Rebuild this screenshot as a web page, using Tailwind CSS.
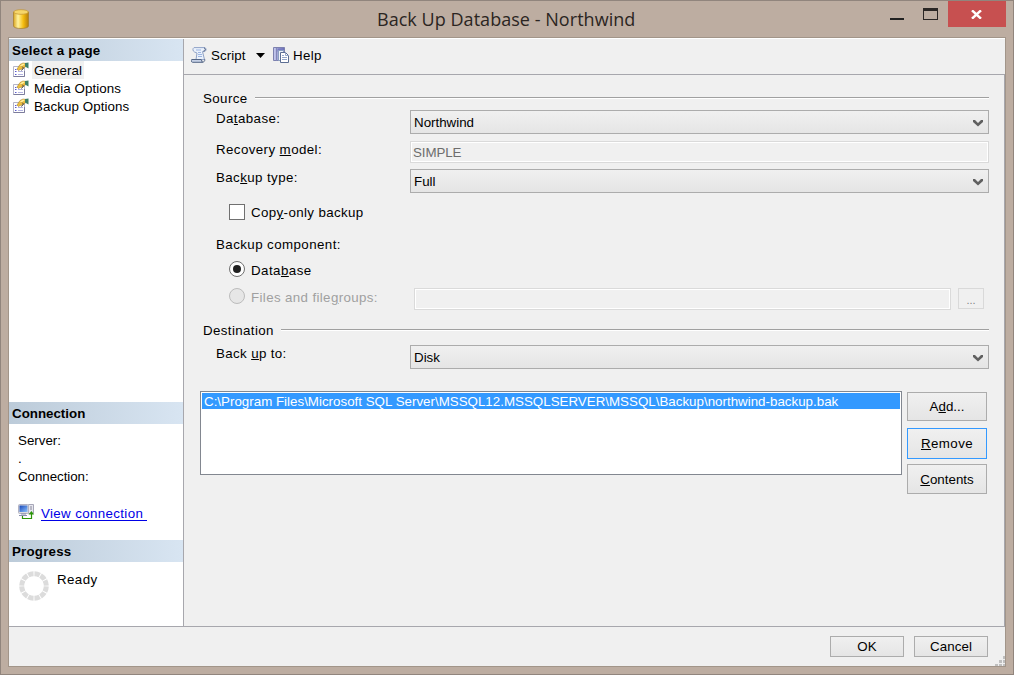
<!DOCTYPE html>
<html lang="en">
<head>
<meta charset="utf-8">
<title>Back Up Database - Northwind</title>
<script src="https://cdn.jsdelivr.net/npm/@tailwindcss/browser@4"></script>
</head>
<body class="w-[1014px] h-[675px] overflow-hidden font-['Liberation_Sans',Arial,sans-serif] text-[13.33px] leading-[18px] text-black">
<svg class="absolute h-0 w-0">
  <defs>
    <linearGradient id="gold" x1="0" x2="1"><stop offset="0" stop-color="#d9a520"/><stop offset=".3" stop-color="#fff3a0"/><stop offset=".65" stop-color="#f5bd10"/><stop offset="1" stop-color="#b57c0a"/></linearGradient>
    <linearGradient id="screen" x1="0" y1="0" x2="1" y2="1"><stop offset="0" stop-color="#1746b8"/><stop offset="1" stop-color="#8fc4ff"/></linearGradient>
    <linearGradient id="book" x1="0" x2="1"><stop offset="0" stop-color="#c9cdf0"/><stop offset="1" stop-color="#6467ae"/></linearGradient>
    <symbol id="page" viewBox="0 0 16 16">
      <path d="M.5 4.500h11v10H.5z" fill="#fff" stroke="#b5b5c8"/>
      <path d="M.5 14.500h11V9" fill="none" stroke="#7c7c9c"/>
      <path d="M2 7.500h1.500M2 9.500h1.500M2 12.500h1.500" stroke="#5a5ad0"/>
      <path d="M5 9.500h5M5 12.500h5" stroke="#b4b4e0"/>
      <path d="M4 7l3-4.500L10 1l3 .5-1 4-3 1.500-2 .5-1.500 1z" fill="#efbe3c" stroke="#a48430" stroke-width=".6"/>
      <path d="M7 3.500L10 1.500l2 .5-3.500 2.500z" fill="#fff0a0"/>
      <path d="M12 1l3.500-.5v6L12 4.500z" fill="#3d8068"/>
      <path d="M9 4.500l1.500 1.500-2 2.500" stroke="#444" fill="none"/>
    </symbol>
    <symbol id="chev" viewBox="0 0 10 8"><path d="M0 1h2l3 3 3-3h2v2L5 7.500 0 3z" fill="#606060"/></symbol>
  </defs>
</svg>
<div class="flex h-[675px] w-[1014px] flex-col border border-[#91857d] bg-[#bdada1] px-[7px] pb-[7px]">
  <header class="flex h-9 shrink-0 items-start">
    <svg class="ml-[5px] mt-2 h-5 w-4" viewBox="0 0 16 20"><path d="M.5 3v14c0 3.300 15 3.300 15 0V3z" fill="url(#gold)" stroke="#a57d2b" stroke-width=".7"/><ellipse cx="8" cy="3" rx="7.300" ry="2.300" fill="#f6d66a" stroke="#c29432" stroke-width=".7"/></svg>
    <h1 class="ml-[348px] mt-[6px] w-[300px] whitespace-nowrap font-['Open_Sans',sans-serif] text-[18px] leading-6 tracking-[.04px] text-[#2b2522]">Back Up Database - Northwind</h1>
    <svg class="ml-[213px] mt-[7px] h-3 w-12" viewBox="0 0 48 12" shape-rendering="crispEdges"><path d="M0 10h14v2H0z" fill="#222"/><path d="M33 0h15v12H33zm1 3v8h13V3z" fill="#2b2725" fill-rule="evenodd"/></svg>
    <div class="ml-[10px] flex h-[26px] w-[58px] items-center justify-center bg-[#c75050]"><svg class="mr-[2px] h-[9px] w-[11px]" viewBox="0 0 11 9"><path d="M1 .3l9 8.400M10 .3L1 8.700" stroke="#fff" stroke-width="2.400"/></svg></div>
  </header>
  <div class="flex min-h-0 w-[998px] grow flex-col border border-[#a29589] bg-[#f0f0f0]">
    <div class="flex h-[588px] shrink-0 border-t border-white">
      <aside class="flex w-[175px] shrink-0 flex-col border-r border-[#a7a7ad] bg-white">
        <h2 class="h-[22px] bg-linear-to-r from-[#bccbd9] to-[#d8e5f2] pl-[3px] pt-[3px] font-bold tracking-[.25px]">Select a page</h2>
        <ul class="h-[341px]">
          <li class="flex h-[18px] items-center gap-1 pl-1"><svg class="h-4 w-4"><use href="#page"/></svg><span class="-ml-px h-[18px] bg-[#f0f0f0] px-[2px] pt-px tracking-[.1px]">General</span></li>
          <li class="flex h-[18px] items-center gap-[5px] pl-1"><svg class="h-4 w-4"><use href="#page"/></svg><span class="pt-px tracking-[.08px]">Media Options</span></li>
          <li class="flex h-[18px] items-center gap-[5px] pl-1"><svg class="h-4 w-4"><use href="#page"/></svg><span class="pt-px tracking-[.08px]">Backup Options</span></li>
        </ul>
        <h2 class="h-[22px] bg-linear-to-r from-[#bccbd9] to-[#d8e5f2] pl-[3px] pt-[3px] font-bold">Connection</h2>
        <div class="h-[116px] pl-[9px] pt-2">
          <p class="h-[18px]">Server:</p>
          <p class="h-[18px]">.</p>
          <p class="h-[36px] tracking-[-.05px]">Connection:</p>
          <div class="flex">
            <svg class="h-4 w-4" viewBox="0 0 16 16"><path d="M10.500 .5h5v9h-5z" fill="#e6e6ee" stroke="#a7a7b8"/><path d="M12 3h2M12 5h2" stroke="#889"/><rect x=".5" y=".5" width="10" height="9" rx="1" fill="#ddd" stroke="#b3b3c4"/><path d="M1.500 1.500h8v6.500h-8z" fill="url(#screen)"/><path d="M1 11.500h8M3 10h5" stroke="#888fae"/><path d="M4.500 12v2.500h9V9" fill="none" stroke="#2b9409" stroke-width="1.200"/><path d="M10.500 10.500l3-3.500 2.500 3.500z" fill="#2b9409"/></svg>
            <a class="ml-[7px] mt-px h-4 w-[106px] whitespace-nowrap border-b border-[#0000e6] text-[#0000e6] tracking-[.36px]">View connection</a>
          </div>
        </div>
        <h2 class="h-[22px] bg-linear-to-r from-[#bccbd9] to-[#d8e5f2] pl-[3px] pt-[3px] font-bold tracking-[.2px]">Progress</h2>
        <div class="flex grow pl-[10px] pt-[9px]">
          <svg class="h-[30px] w-[30px]" viewBox="0 0 30 30"><circle cx="15" cy="15" r="12.300" fill="none" stroke="#dcdcdc" stroke-width="5" pathLength="120" stroke-dasharray="8.500 1.500" stroke-dashoffset="-.75"/></svg>
          <span class="ml-2 tracking-[.4px]">Ready</span>
        </div>
      </aside>
      <main class="flex grow flex-col">
        <div class="flex h-9 shrink-0 items-start border-b border-[#a7a7ad] pl-[7px] pt-2">
          <svg class="h-4 w-4" viewBox="0 0 16 16"><path d="M3 .6h10c3 0 2.500 4 0 4h-1.500l2 8H5L6 6 3.500 5C1.500 4 1.500 1.500 3 .6z" fill="#eaf1fb" stroke="#8fa2c6"/><path d="M5 3h5M7 5.500h3M7 7.500h4M7 9.500h4" stroke="#9bb4e2"/><path d="M.7 12.500h9.600l1 2.800H1.500C.2 15 0 13.500 .7 12.500z" fill="#c5d0e5" stroke="#536585"/><path d="M11 15.200c3 0 3-2.200 2.500-3.200" fill="none" stroke="#536585"/><path d="M13 1c2 .5 1.500 3-.5 3" fill="none" stroke="#3f4f72"/></svg>
          <span class="ml-[4px] w-[45px] tracking-[.1px]">Script</span>
          <svg class="mt-[6px] h-[5px] w-[9px]" viewBox="0 0 9 5"><path d="M0 0h9L4.500 5z"/></svg>
          <svg class="ml-2 h-4 w-4" viewBox="0 0 16 16"><path d="M.5 .5h11v13H.5z" fill="url(#book)" stroke="#7d81af"/><path d="M3.500 1v13" stroke="#8388b8"/><path d="M4.500 1.500h6v3h-6z" fill="#777bc2"/><path d="M5.500 3.500h5v10h-5z" fill="#eef2fa" stroke="#8ba0c1"/><path d="M7.500 5.500h5l3 3v7h-8z" fill="#fff" stroke="#5c6e93"/><path d="M12.500 5.500v3h3M9 8.500h2M9 10.500h5M9 12.500h5" stroke="#94a7c9" fill="none"/></svg>
          <span class="ml-1 tracking-[.35px]">Help</span>
        </div>
        <div class="flex grow flex-col border-r border-[#a7a7ad] pl-4 pr-[15px] pt-[15px]">
          <div class="flex h-5 pl-[3px]"><span class="tracking-[.4px]">Source</span><i class="ml-[7px] mt-[7px] h-[2px] grow border-t border-[#a0a0a0] bg-white"></i></div>
          <div class="flex h-[31px] pl-4"><label class="w-[194px] tracking-[.4px]">Da<u>t</u>abase:</label><div class="flex h-6 grow items-center justify-between border border-[#acacac] bg-linear-to-b from-[#f0f0f0] to-[#e5e5e5] pl-[3px] pr-[5px]"><span class="pt-[2px]">Northwind</span><svg class="mt-[2px] h-2 w-[10px]"><use href="#chev"/></svg></div></div>
          <div class="flex h-7 pl-4"><label class="w-[194px] tracking-[.4px]">Recovery <u>m</u>odel:</label><div class="flex h-[22px] grow items-center border border-[#dadada] pl-[2px] pt-[2px] tracking-[-.1px] text-[#6d6d6d] inset-ring inset-ring-white">SIMPLE</div></div>
          <div class="flex h-[35px] pl-4"><label class="w-[194px] tracking-[.4px]">Bac<u>k</u>up type:</label><div class="flex h-6 grow items-center justify-between border border-[#acacac] bg-linear-to-b from-[#f0f0f0] to-[#e5e5e5] pl-[3px] pr-[5px]"><span class="pt-[2px]">Full</span><svg class="mt-[2px] h-2 w-[10px]"><use href="#chev"/></svg></div></div>
          <div class="flex h-8 gap-[6px] pl-[29px] tracking-[.37px]"><i class="h-4 w-4 border border-[#707070] bg-white"></i><span>Cop<u>y</u>-only backup</span></div>
          <div class="h-[25px] pl-4 tracking-[.42px]">Backup component:</div>
          <div class="flex h-[27px] gap-[6px] pl-[29px] tracking-[.45px]"><i class="flex h-4 w-4 items-center justify-center rounded-full border border-[#707070] bg-white"><i class="h-2 w-2 rounded-full bg-[#212121]"></i></i><span class="pt-px">Data<u>b</u>ase</span></div>
          <div class="flex h-[34px] pl-[29px] text-[#a0a0a0]"><i class="mr-[6px] h-4 w-4 rounded-full border border-[#bcbcbc] bg-[#e6e6e6]"></i><span class="w-[163px] pt-px tracking-[.36px]">Files and file<u>g</u>roups:</span><i class="h-[22px] grow border border-[#dadada] inset-ring inset-ring-white"></i><span class="ml-[7px] mr-[5px] h-[21px] w-[26px] border border-[#d9d9d9] pt-[3px] text-center text-[11px] leading-4 text-[#838383]">...</span></div>
          <div class="flex h-[23px] pl-[3px]"><span class="tracking-[.38px]">Destination</span><i class="ml-[7px] mt-[7px] h-[2px] grow border-t border-[#a0a0a0] bg-white"></i></div>
          <div class="flex h-[46px] pl-4"><label class="w-[194px] tracking-[.36px]">Back <u>u</u>p to:</label><div class="flex h-6 grow items-center justify-between border border-[#acacac] bg-linear-to-b from-[#f0f0f0] to-[#e5e5e5] pl-[3px] pr-[5px]"><span class="pt-[2px]">Disk</span><svg class="mt-[2px] h-2 w-[10px]"><use href="#chev"/></svg></div></div>
          <div class="flex">
            <div class="h-[84px] w-[702px] shrink-0 border border-[#828790] bg-white p-px"><div class="h-4 whitespace-nowrap bg-[#3399ff] pl-[2px] tracking-[.01px] text-white">C:\Program Files\Microsoft SQL Server\MSSQL12.MSSQLSERVER\MSSQL\Backup\northwind-backup.bak</div></div>
            <div class="ml-[5px] flex w-20 shrink-0 flex-col pt-px text-center">
              <button class="h-[29px] border border-[#acacac] bg-linear-to-b from-[#f0f0f0] to-[#e5e5e5]">A<u>d</u>d...</button>
              <button class="mt-[7px] h-[31px] border border-[#3399ff] bg-linear-to-b from-[#f0f0f0] to-[#e5e5e5] tracking-[.4px]"><u>R</u>emove</button>
              <button class="mt-[5px] h-[30px] border border-[#acacac] bg-linear-to-b from-[#f0f0f0] to-[#e5e5e5] pt-px"><u>C</u>ontents</button>
            </div>
          </div>
        </div>
      </main>
    </div>
    <footer class="relative flex grow justify-end gap-[10px] border-t border-[#a7a7ad] pr-[17px] pt-[9px]">
      <button class="h-[21px] w-[74px] border border-[#acacac] bg-linear-to-b from-[#f0f0f0] to-[#e5e5e5] leading-4">OK</button>
      <button class="h-[21px] w-[74px] border border-[#acacac] bg-linear-to-b from-[#f0f0f0] to-[#e5e5e5] leading-4 tracking-[.1px]">Cancel</button>
      <svg class="absolute bottom-0 right-0 h-[10px] w-[10px]" viewBox="0 0 10 10"><path d="M8 0h2v3H8zM4 4h3v3H4zM8 4h2v3H8zM0 8h3v2H0zM4 8h3v2H4zM8 8h2v2H8z" fill="#bfbfbf"/></svg>
    </footer>
  </div>
</div>
</body>
</html>
